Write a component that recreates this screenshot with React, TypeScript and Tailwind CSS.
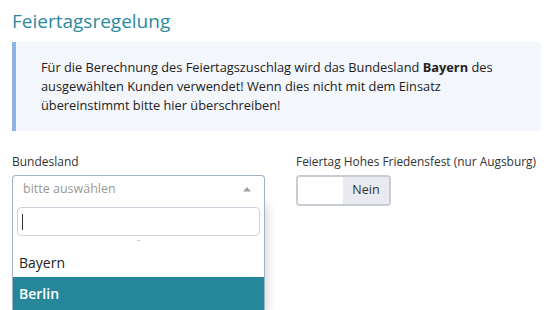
const App = () => {
  return (
    <div className="w-[553px] h-[310px] overflow-hidden bg-white px-3 font-['Open_Sans',sans-serif] text-[#333]">
      <h3 className="pt-[9px] text-[19px] leading-[24px] text-[#2b8a9e]">Feiertagsregelung</h3>

      <div className="mt-[9px] h-[89px] rounded-r-[4px] border-l-4 border-[#8db4e6] bg-[#f3f6fb] pl-[25px] pr-4 pt-[16px] text-[12.8px] leading-[19px] text-[#222]">
        <p>
          Für die Berechnung des Feiertagszuschlag wird das Bundesland <b className="font-bold">Bayern</b> des
          ausgewählten Kunden verwendet! Wenn dies nicht mit dem Einsatz übereinstimmt bitte hier überschreiben!
        </p>
      </div>

      <div className="mt-[22px] flex gap-[31px]">
        <div className="w-[253px]">
          <label className="block text-[12px] leading-[17px] text-[#333]">Bundesland</label>
          <div className="relative mt-[5px]">
            <div className="flex h-[26px] items-center justify-between rounded-t-[4px] border border-b-0 border-[#a3b1c6] pl-[10px] pr-[10px] pt-[1px] text-[12.5px] text-[#999]">
              <span>bitte auswählen</span>
              <svg width="10" height="6" viewBox="0 0 10 6" className="mr-[2px]">
                <path d="M1 5.5 L5 1 L9 5.5 Z" fill="#9aa0a6" />
              </svg>
            </div>
            <div className="absolute left-0 top-[26px] w-full border-x border-[#a3b1c6] bg-white shadow-[4px_4px_8px_rgba(0,0,0,0.12)]">
              <div className="px-[4px] pt-[6px]">
                <div className="flex h-[29px] items-center rounded-[4px] border border-[#ccd2dc] pl-[4px]">
                  <span className="h-[16px] w-px bg-[#333]" />
                </div>
              </div>
              <div className="flex h-[9px] justify-center pt-[4px]">
                <span className="h-px w-[3px] bg-[#ccc]" />
              </div>
              <div className="flex h-[32px] items-center px-[6px] pt-[3px] text-[14px] text-[#222]">Bayern</div>
              <div className="flex h-[33px] items-center bg-[#27879a] px-[6px] text-[14px] font-semibold text-white">Berlin</div>
            </div>
          </div>
        </div>

        <div>
          <label className="block text-[11.9px] leading-[17px] text-[#333]">Feiertag Hohes Friedensfest (nur Augsburg)</label>
          <div className="mt-[5px] flex h-[31px] w-[95px] overflow-hidden rounded-[4px] border-2 border-[#c8ccd5]">
            <div className="w-[45px] bg-white" />
            <div className="flex flex-1 items-center justify-center bg-[#e9eaef] text-[12.5px] text-[#333]">Nein</div>
          </div>
        </div>
      </div>
    </div>
  );
};

export default App;
